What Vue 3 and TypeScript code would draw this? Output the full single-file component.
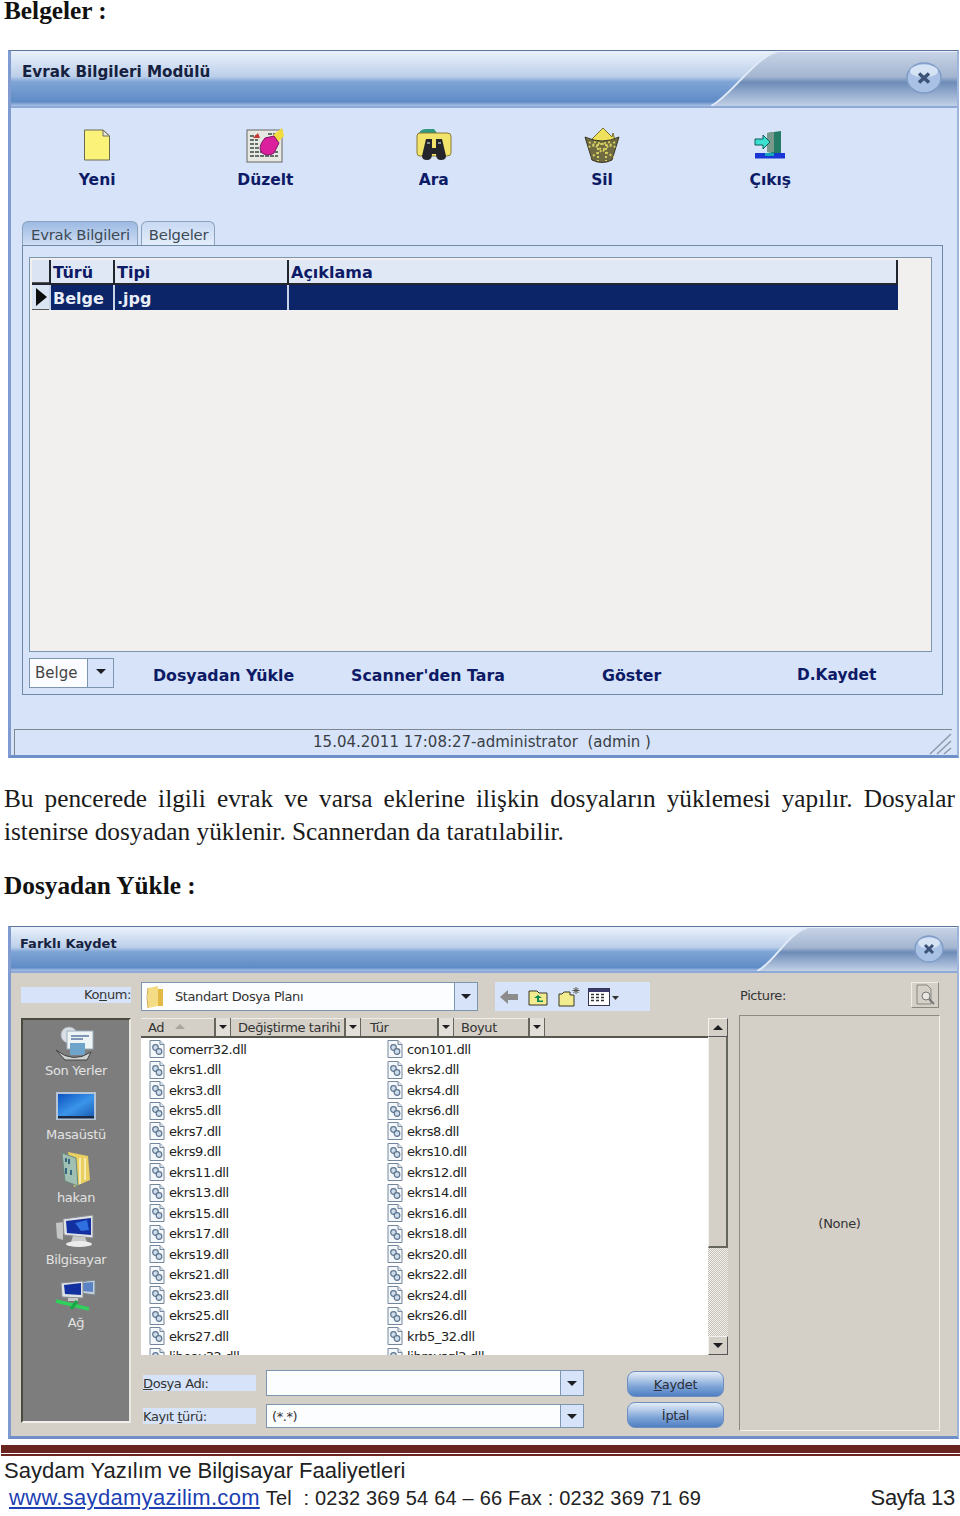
<script setup lang="ts">
// left and right columns of the file list, top to bottom
const leftFiles: string[] = ['comerr32.dll', 'ekrs1.dll', 'ekrs3.dll', 'ekrs5.dll', 'ekrs7.dll', 'ekrs9.dll', 'ekrs11.dll', 'ekrs13.dll', 'ekrs15.dll', 'ekrs17.dll', 'ekrs19.dll', 'ekrs21.dll', 'ekrs23.dll', 'ekrs25.dll', 'ekrs27.dll', 'libeay32.dll']
const rightFiles: string[] = ['con101.dll', 'ekrs2.dll', 'ekrs4.dll', 'ekrs6.dll', 'ekrs8.dll', 'ekrs10.dll', 'ekrs12.dll', 'ekrs14.dll', 'ekrs16.dll', 'ekrs18.dll', 'ekrs20.dll', 'ekrs22.dll', 'ekrs24.dll', 'ekrs26.dll', 'krb5_32.dll', 'libmysql2.dll']
const files = leftFiles.flatMap((name, i) => [name, rightFiles[i]])

const headers = [
  { label: 'Ad', width: 73, pad: 7, sort: true },
  { label: 'Değiştirme tarihi', width: 113, pad: 7, sort: false },
  { label: 'Tür', width: 76, pad: 9, sort: false },
  { label: 'Boyut', width: 74, pad: 7, sort: false },
]
</script>

<template>
  <div class="page">
    <h2 class="head first">Belgeler :</h2>

    <section class="win win-a">
      <header class="title title-a">
        <span>Evrak Bilgileri Modülü</span>
        <svg class="notch" width="246" height="56" viewBox="0 0 246 56">
          <defs>
            <linearGradient id="ng" x1="0" y1="0" x2="0" y2="1">
              <stop offset="0" stop-color="#c7d3e6" />
              <stop offset=".46" stop-color="#a3b5d0" />
              <stop offset=".56" stop-color="#6e8cb8" />
              <stop offset="1" stop-color="#c1d0e6" />
            </linearGradient>
          </defs>
          <path d="M0 55 C20 45 45 5 66 1 L246 1 L246 55Z" fill="url(#ng)" />
          <path d="M0 55 C20 45 45 5 66 1" fill="none" stroke="#dfe9f7" stroke-width="2" />
        </svg>
        <svg class="close close-a" width="36" height="32" viewBox="0 0 36 32">
          <ellipse cx="18" cy="16" rx="17" ry="15" fill="#a9c1e4" stroke="#7e9cc6" stroke-width="1.5" />
          <ellipse cx="18" cy="9" rx="14" ry="6.500" fill="#e4edf9" opacity=".75" />
          <path d="M13 11.500 L23 20.500 M23 11.500 L13 20.500" stroke="#3d5377" stroke-width="3.600" />
        </svg>
      </header>
      <div class="win-a-body">
        <div class="toolbar">
          <div class="tool">
            <svg width="30" height="34" viewBox="0 0 30 34">
              <path d="M2.500 2 H21 L27.500 8 V32 H2.500Z" fill="#fbf27a" stroke="#6a6a58" />
              <path d="M21 2 V8 H27.500Z" fill="#e8e8e0" stroke="#6a6a58" />
            </svg>
            <span>Yeni</span>
          </div>
          <div class="tool">
            <svg width="38" height="36" viewBox="0 0 38 36">
              <rect x="1" y="3" width="35" height="32" fill="#e8e8e2" stroke="#666" />
              <path d="M4 9h10M4 13h8M4 17h8M4 21h10M4 25h28M4 29h28M22 7h10" stroke="#66706a" stroke-width="2" stroke-dasharray="4 1" />
              <path d="M12 6 L7 11 L14 11Z" fill="#c53a30" />
              <path d="M27 8 L36 1 L38 9 L31 16Z" fill="#f3dc3d" />
              <path d="M19 11 L28 9 L33 16 L28 26 Q22 30 16 26 Q11 20 19 11Z" fill="#dc1f9c" stroke="#7b1866" />
            </svg>
            <span>Düzelt</span>
          </div>
          <div class="tool">
            <svg width="36" height="34" viewBox="0 0 36 34">
              <path d="M3 5 Q5 1 10 1 H18 L21 5Z" fill="#2f9a80" />
              <path d="M1 8 Q1 5 4 5 H31 Q35 5 35 8 V25 Q35 28 31 28 H4 Q1 28 1 25Z" fill="#f2e36a" stroke="#8a7a35" />
              <path d="M10 11 H16 V20 H20 V11 H26 L30 28 Q30 32 25 32 Q20 32 20 26 H16 Q16 32 11 32 Q6 32 6 28Z" fill="#23252b" />
              <path d="M11 15h3M22 15h3" stroke="#8b8f99" stroke-width="2" />
            </svg>
            <span>Ara</span>
          </div>
          <div class="tool">
            <svg width="36" height="36" viewBox="0 0 36 36">
              <path d="M8 12 L19 1 L28 10 L29 6 L31 14 L18 18Z" fill="#eee25d" stroke="#77702e" />
              <path d="M1 10 Q18 18 35 10 L28 33 Q18 38 8 33Z" fill="#6f6a42" stroke="#3c3924" />
              <path d="M5 15 L30 30 M10 15 L32 20 M31 15 L7 30 M26 15 L4 20 M14 17 L14 34 M22 17 L22 34" stroke="#d6cf5f" stroke-width="2" stroke-dasharray="2 2" />
            </svg>
            <span>Sil</span>
          </div>
          <div class="tool">
            <svg width="32" height="30" viewBox="0 0 32 30">
              <path d="M13 3 L27 1 V24 H24 L13 22Z" fill="#247c66" />
              <path d="M13 3 L20 2 V22 L13 22Z" fill="#79998c" />
              <rect x="1" y="23" width="30" height="5.500" fill="#1a35d6" />
              <path d="M11 23 H20 V26 H11Z" fill="#16a8b8" />
              <path d="M1 9 H9 V5 L16 12 L9 19 V15 H1Z" fill="#3ce0d0" stroke="#0c5d5a" />
            </svg>
            <span>Çıkış</span>
          </div>
        </div>

        <div class="tabs">
          <span class="tab active">Evrak Bilgileri</span>
          <span class="tab">Belgeler</span>
        </div>

        <div class="panel">
          <div class="grid">
            <div class="row row-head">
              <span class="ind"></span>
              <span class="cell c1">Türü</span>
              <span class="cell c2">Tipi</span>
              <span class="cell c3">Açıklama</span>
            </div>
            <div class="row row-sel">
              <span class="ind"><i class="tri"></i></span>
              <span class="cell c1">Belge</span>
              <span class="cell c2">.jpg</span>
              <span class="cell c3"></span>
            </div>
          </div>
          <div class="actions">
            <div class="mini-combo">
              <span class="mini-val">Belge</span>
              <span class="mini-arrow"><i class="down"></i></span>
            </div>
            <span class="act a1">Dosyadan Yükle</span>
            <span class="act a2">Scanner'den Tara</span>
            <span class="act a3">Göster</span>
            <span class="act a4">D.Kaydet</span>
          </div>
        </div>

        <div class="status">
          <span>15.04.2011 17:08:27-administrator&nbsp; (admin )</span>
          <svg class="grip" width="24" height="22" viewBox="0 0 24 22">
            <path d="M2 21 L23 1 M9 21 L23 8 M16 21 L23 15" stroke="#8d9aa8" stroke-width="1.500" />
          </svg>
        </div>
      </div>
    </section>

    <p class="para">Bu pencerede ilgili evrak ve varsa eklerine ilişkin dosyaların yüklemesi yapılır. Dosyalar istenirse dosyadan yüklenir. Scannerdan da taratılabilir.</p>

    <h2 class="head second">Dosyadan Yükle :</h2>

    <section class="win win-b">
      <header class="title title-b">
        <span>Farklı Kaydet</span>
        <svg class="notch" width="200" height="45" viewBox="0 0 200 45">
          <defs>
            <linearGradient id="ng2" x1="0" y1="0" x2="0" y2="1">
              <stop offset="0" stop-color="#c7d3e6" />
              <stop offset=".46" stop-color="#a3b5d0" />
              <stop offset=".56" stop-color="#6e8cb8" />
              <stop offset="1" stop-color="#c1d0e6" />
            </linearGradient>
          </defs>
          <path d="M0 44 C16 37 32 5 50 1 L200 1 L200 44Z" fill="url(#ng2)" />
          <path d="M0 44 C16 37 32 5 50 1" fill="none" stroke="#dfe9f7" stroke-width="2" />
        </svg>
        <svg class="close close-b" width="30" height="28" viewBox="0 0 30 28">
          <ellipse cx="15" cy="14" rx="14" ry="13" fill="#a9c1e4" stroke="#7e9cc6" stroke-width="1.500" />
          <ellipse cx="15" cy="8" rx="11" ry="5.500" fill="#e4edf9" opacity=".75" />
          <path d="M11 10 L19 18 M19 10 L11 18" stroke="#3d5377" stroke-width="3" />
        </svg>
      </header>

      <div class="dlg">
        <div class="dlg-left">
          <label class="konum">Ko<u>n</u>um:</label>
          <aside class="places">
            <div class="place p1">
              <svg width="46" height="36" viewBox="0 0 46 36">
                <circle cx="16" cy="9" r="8" fill="#d9dfe4" stroke="#aab2b9" />
                <rect x="14" y="5" width="26" height="18" fill="#eef3f6" stroke="#9fb0bd" />
                <path d="M18 10h18M18 13h12" stroke="#7e97b5" stroke-width="2" />
                <rect x="17" y="17" width="15" height="12" fill="#6ea4c9" />
                <path d="M3 24 Q20 38 38 26 L34 34 H12Z" fill="#cfd2d2" stroke="#444" />
              </svg>
              <span>Son Yerler</span>
            </div>
            <div class="place p2">
              <svg width="42" height="30" viewBox="0 0 42 30">
                <defs>
                  <linearGradient id="dk" x1="0" y1="0" x2="1" y2="1">
                    <stop offset="0" stop-color="#0c52c0" />
                    <stop offset=".55" stop-color="#3b95ea" />
                    <stop offset="1" stop-color="#1a5fb8" />
                  </linearGradient>
                </defs>
                <rect x="1" y="1" width="40" height="28" fill="#b5c5d6" />
                <rect x="3" y="3" width="36" height="22" fill="url(#dk)" />
                <rect x="3" y="25" width="36" height="2.500" fill="#1b2a44" />
              </svg>
              <span>Masaüstü</span>
            </div>
            <div class="place p3">
              <svg width="32" height="38" viewBox="0 0 32 38">
                <path d="M8 2 L28 6 L30 30 L14 37Z" fill="#e9cf62" />
                <path d="M2 3 L16 8 L18 36 L5 31Z" fill="#9fc0b2" stroke="#6c8a7b" />
                <path d="M6 8v4M9 9v5M6 18v6M11 20v5" stroke="#38687d" stroke-width="2" />
                <path d="M20 8v26M25 8v22" stroke="#f5ebb0" stroke-width="2" />
              </svg>
              <span>hakan</span>
            </div>
            <div class="place p4">
              <svg width="42" height="34" viewBox="0 0 42 34">
                <path d="M1 9 L8 8 V26 L2 24Z" fill="#c4c6c6" />
                <path d="M8 5 L38 1 V24 L9 21Z" fill="#dfe2e4" stroke="#8a8f92" />
                <path d="M11 7 L36 4 V21 L12 19Z" fill="#12309f" />
                <path d="M20 9 L32 6 L34 16 L26 17Z" fill="#2f6fe0" />
                <path d="M18 22 L30 23 L32 28 H16Z" fill="#c8caca" />
                <ellipse cx="24" cy="30" rx="13" ry="3" fill="#ececec" />
              </svg>
              <span>Bilgisayar</span>
            </div>
            <div class="place p5">
              <svg width="42" height="32" viewBox="0 0 42 32">
                <path d="M24 3 L40 1 V16 L25 14Z" fill="#c6cfd6" stroke="#7a8891" />
                <path d="M27 4 L38 3 V13 L27 12Z" fill="#5a83c5" />
                <path d="M6 4 L28 2 V19 L7 18Z" fill="#dfe2e4" stroke="#8a8f92" />
                <path d="M9 6 L26 4 V16 L10 15Z" fill="#12309f" />
                <path d="M13 19h10v3H13z" fill="#c8caca" />
                <path d="M1 22 L34 30" stroke="#2fd05c" stroke-width="3.500" />
                <path d="M22 22 L16 30" stroke="#18a844" stroke-width="3" />
              </svg>
              <span>Ağ</span>
            </div>
          </aside>
        </div>

        <div class="dlg-mid">
          <div class="top-row">
            <div class="combo combo-loc">
              <svg width="20" height="24" viewBox="0 0 20 24">
                <path d="M3 3 L13 1 V21 L3 23Z" fill="#f4dc85" />
                <path d="M13 4 H18 V21 L13 21Z" fill="#e4b844" />
                <path d="M3 3 Q1 12 3 23" fill="none" stroke="#d3ae50" />
              </svg>
              <span class="combo-text">Standart Dosya Planı</span>
              <span class="combo-arrow"><i class="down"></i></span>
            </div>
            <div class="nav-icons">
              <svg width="18" height="14" viewBox="0 0 18 14">
                <path d="M0 7 L8 0 V4 H18 V10 H8 V14Z" fill="#8c8c8c" />
              </svg>
              <svg class="ni-up" width="20" height="18" viewBox="0 0 20 18">
                <path d="M1 3 H9 L11 5 H19 V17 H1Z" fill="#f3ec8e" stroke="#37372a" />
                <path d="M10 7 L6 10 H9 V14 H15 V12.500 H11 V10 H14Z" fill="#0c8a52" />
              </svg>
              <svg class="ni-new" width="22" height="20" viewBox="0 0 22 20">
                <path d="M1 7 H4 L6 5 H12 V8 H16 V19 H1Z" fill="#f3ec8e" stroke="#37372a" />
                <path d="M18 0v7M14.500 3.500h7M15.500 1l5 5M20.500 1l-5 5" stroke="#54544a" />
              </svg>
              <svg class="ni-view" width="32" height="18" viewBox="0 0 32 18">
                <rect x="0.500" y="0.500" width="21" height="17" fill="#fff" stroke="#33334a" />
                <rect x="0.500" y="0.500" width="21" height="3.500" fill="#3a3a6a" />
                <path d="M3 6.500h3M8 6.500h3M13 6.500h3M3 9.500h3M8 9.500h3M13 9.500h3M3 12.500h3M8 12.500h3M13 12.500h3" stroke="#333" stroke-width="1.600" />
                <path d="M24 8h7L27.500 12Z" fill="#333" />
              </svg>
            </div>
          </div>

          <div class="browser">
            <div class="listing">
              <div class="list-head">
                <template v-for="h in headers" :key="h.label">
                  <span class="lh" :style="{ width: h.width + 'px', paddingLeft: h.pad + 'px' }">
                    {{ h.label }}
                    <i v-if="h.sort" class="up-sort"></i>
                  </span>
                  <span class="lh-drop"><i class="down small"></i></span>
                </template>
                <span class="lh-rest"></span>
              </div>
              <div class="list-body">
                <div v-for="f in files" :key="f" class="file">
                  <svg width="16" height="18" viewBox="0 0 16 18">
                    <path d="M1 .500 H11 L15 4.500 V17.500 H1Z" fill="#f5f8fb" stroke="#75879c" />
                    <path d="M11 .500 V4.500 H15" fill="#dfe6ee" stroke="#75879c" />
                    <circle cx="6.500" cy="7.500" r="2.800" fill="#cfdcea" stroke="#5d7590" stroke-width="1.200" />
                    <circle cx="10" cy="11.500" r="2.800" fill="#cfdcea" stroke="#5d7590" stroke-width="1.200" />
                  </svg>
                  <span>{{ f }}</span>
                </div>
              </div>
            </div>
            <div class="scroll">
              <span class="sb-btn"><i class="up"></i></span>
              <span class="sb-thumb"></span>
              <span class="sb-track"></span>
              <span class="sb-btn"><i class="down"></i></span>
            </div>
          </div>

          <div class="form">
            <div class="fields">
              <div class="field f-a">
                <label class="f-label"><u>D</u>osya Adı:</label>
                <div class="combo f-combo f-combo-a">
                  <span class="combo-text"></span>
                  <span class="combo-arrow"><i class="down"></i></span>
                </div>
              </div>
              <div class="field f-b">
                <label class="f-label">Kayıt <u>t</u>ürü:</label>
                <div class="combo f-combo f-combo-b">
                  <span class="combo-text">(*.*)</span>
                  <span class="combo-arrow"><i class="down"></i></span>
                </div>
              </div>
            </div>
            <div class="btns">
              <button class="btn"><u>K</u>aydet</button>
              <button class="btn">İptal</button>
            </div>
          </div>
        </div>

        <div class="dlg-right">
          <div class="pic-head">
            <span>Picture:</span>
            <span class="pic-btn">
              <svg width="22" height="22" viewBox="0 0 22 22">
                <path d="M3 1 H13 L17 5 V20 H3Z" fill="none" stroke="#85857c" />
                <circle cx="12" cy="12" r="4" fill="#e9e7e0" stroke="#777" />
                <path d="M15 15 L20 20" stroke="#777" stroke-width="2" />
              </svg>
            </span>
          </div>
          <div class="pic-box">(None)</div>
        </div>
      </div>
    </section>

    <footer class="foot">
      <div class="rule"></div>
      <div class="foot-a">Saydam Yazılım ve Bilgisayar Faaliyetleri</div>
      <div class="foot-b">
        <a class="link">www.saydamyazilim.com</a>
        <span class="tel">Tel&nbsp; : 0232 369 54 64 – 66 Fax : 0232 369 71 69</span>
        <span class="pageno">Sayfa 13</span>
      </div>
    </footer>
  </div>
</template>

<style scoped>
.page {
  width: 960px;
  height: 1516px;
  overflow: hidden;
  background: #fff;
  color: #111;
  font-family: "DejaVu Sans", sans-serif;
}
.head {
  margin: 0;
  padding-left: 4px;
  font: bold 25.300px/20px "Liberation Serif", serif;
}
.head.first { height: 22px; margin-bottom: 28px; }
.head.second { height: 28px; margin: 23px 0 27px; line-height: 28px; }
.para {
  margin: 24px 5px 0 4px;
  font: 25.300px/33px "Liberation Serif", serif;
  text-align: justify;
  color: #1a1a1a;
}

/* windows */
.win {
  margin-left: 8px;
  width: 951px;
  border: 1px solid #5d7397;
  border-left: 3px solid #7f9bd0;
  border-bottom: 3px solid #6f8fc8;
  border-right: 2px solid #9db5dc;
  box-sizing: border-box;
}
.win-a { height: 708px; background: #d6e3f8; }
.win-b { height: 513px; background: #d4d0c8; }
.title {
  position: relative;
  overflow: hidden;
  font-weight: bold;
  color: #16213f;
  border-bottom: 2px solid #8fa9d6;
  box-sizing: border-box;
  background: linear-gradient(#eaf2fc 0, #bccfe9 46%, #7fa5d6 56%, #5f8bc5 92%, #a9c0e6 100%);
}
.title-a { height: 57px; padding: 12px 0 0 11px; font-size: 15.200px; line-height: 18px; }
.title-b { height: 46px; padding: 9px 0 0 9px; font-size: 13px; line-height: 16px; }
.notch { position: absolute; right: 0; top: 0; }
.close { position: absolute; }
.close-a { right: 15px; top: 11px; }
.close-b { right: 13px; top: 8px; }

/* evrak window */
.win-a-body { display: flex; flex-direction: column; height: 648px; }
.toolbar { display: flex; height: 113px; padding: 18px 0 0 2px; box-sizing: border-box; }
.tool {
  width: 168.300px;
  display: flex;
  flex-direction: column;
  align-items: center;
  font-weight: bold;
  font-size: 15.500px;
  color: #0d1a66;
}
.tool svg { height: 38px; margin-bottom: 7px; }
.tabs { display: flex; gap: 3px; margin-left: 11px; height: 24px; }
.tab {
  padding: 0 6px 0 7px;
  font-size: 14.800px;
  line-height: 26px;
  color: #3c4a56;
  white-space: nowrap;
  border: 1px solid #8aa2bd;
  border-bottom: 0;
  border-radius: 6px 6px 0 0;
  background: linear-gradient(#c8d9f2, #e3edfb);
  letter-spacing: -.2px;
}
.tab.active { background: linear-gradient(#9dbae2, #cfdef4); padding: 0 7px 0 8px; }
.panel {
  margin-left: 11px;
  width: 921px;
  height: 450px;
  border: 1px solid #6e8aa5;
  box-sizing: border-box;
  padding: 11px 0 0 6px;
}
.grid {
  width: 903px;
  height: 395px;
  box-sizing: border-box;
  border: 1px solid #7d95ae;
  background: #f1f0ee;
  padding: 2px 0 0 2px;
}
.row { display: flex; width: 866px; font-weight: bold; font-size: 16px; }
.row-head { height: 25px; background: #e0e8f6; color: #0d1a66; border-bottom: 2px solid #23262e; box-sizing: border-box; }
.row-sel { height: 25px; color: #e8edf6; background: #0c2468; }
.ind {
  width: 17px;
  flex: none;
  background: #dbe4f3;
  display: flex;
  align-items: center;
  justify-content: center;
  border-bottom: 1px solid #555;
  box-sizing: border-box;
}
.tri { border-left: 11px solid #0d0d0d; border-top: 9px solid transparent; border-bottom: 9px solid transparent; margin-left: 2px; }
.cell { border-left: 2px solid #20242c; box-sizing: border-box; padding-left: 2px; line-height: 25px; white-space: nowrap; }
.row-sel .cell { border-left-color: #c9d3e6; padding-left: 2px; line-height: 27px; }
.c1 { width: 64px; }
.c2 { width: 174px; }
.c3 { flex: 1; border-right: 2px solid #20242c; }
.row-sel .c3 { border-right: 0; }
.actions { display: flex; align-items: center; height: 30px; margin-top: 6px; }
.mini-combo { display: flex; width: 85px; height: 30px; border: 1px solid #7d95ae; box-sizing: border-box; background: #fbfcff; font-size: 15px; color: #444; }
.mini-val { flex: 1; padding-left: 5px; line-height: 28px; }
.mini-arrow { width: 26px; background: #d6e3f8; border-left: 1px solid #7d95ae; display: flex; align-items: center; justify-content: center; padding-bottom: 4px; box-sizing: border-box; }
.down { display: block; border-top: 5px solid #1d1d22; border-left: 5px solid transparent; border-right: 5px solid transparent; }
.down.small { border-top-width: 4px; border-left-width: 4px; border-right-width: 4px; }
.up { display: block; border-bottom: 5px solid #1d1d22; border-left: 5px solid transparent; border-right: 5px solid transparent; }
.act { font-weight: bold; font-size: 15.800px; color: #0d1a66; white-space: nowrap; padding-top: 4px; }
.a1 { margin-left: 39px; width: 198px; }
.a2 { width: 251px; }
.a3 { width: 195px; }
.a4 { font-size: 15.400px; }
.status {
  position: relative;
  margin: 34px 0 0 3px;
  width: 938px;
  height: 26px;
  box-sizing: border-box;
  border-top: 1px solid #7e8790;
  border-left: 1px solid #7e8790;
  text-align: center;
  font-size: 15px;
  line-height: 25px;
  color: #3a3f45;
  padding-right: 3px;
}
.grip { position: absolute; right: 0; bottom: 0; }

/* save dialog */
.dlg { display: flex; padding-top: 9px; height: 454px; box-sizing: border-box; }
.dlg-left { width: 110px; margin-left: 10px; flex: none; }
.konum {
  display: block;
  margin-top: 5px;
  height: 16px;
  text-align: right;
  font-size: 13px;
  line-height: 16px;
  color: #333;
  background: #d6e3f8;
  letter-spacing: -.4px;
}
.places {
  margin-top: 15px;
  height: 405px;
  box-sizing: border-box;
  border: 2px solid #4a4a3f;
  border-right-color: #e8e6df;
  border-bottom-color: #f2f0ea;
  background: #7d7d7d;
  color: #e2e2e2;
  font-size: 13px;
  letter-spacing: -.3px;
  padding-top: 6px;
}
.place { display: flex; flex-direction: column; align-items: center; }
.place span { line-height: 16px; }
.p1 svg { margin-bottom: 1px; }
.p2 { margin-top: 12px; }
.p2 svg { margin-bottom: 6px; }
.p3 { margin-top: 7px; }
.p3 svg { margin-bottom: 2px; }
.p4 { margin-top: 8px; }
.p4 svg { margin-bottom: 4px; }
.p5 { margin-top: 11px; }
.p5 svg { margin-bottom: 4px; }

.dlg-mid { width: 587px; margin-left: 10px; flex: none; }
.top-row { display: flex; height: 29px; margin-bottom: 7px; }
.combo {
  display: flex;
  align-items: center;
  box-sizing: border-box;
  border: 1px solid #7d95ae;
  background: #fcfdff;
  font-size: 13px;
  color: #333;
}
.combo-loc { width: 337px; padding-left: 2px; }
.combo-loc svg { margin: 0 10px 0 1px; }
.combo-text { flex: 1; letter-spacing: -.4px; }
.combo-arrow {
  width: 22px;
  height: 100%;
  flex: none;
  background: #d6e3f8;
  border-left: 1px solid #7d95ae;
  display: flex;
  align-items: center;
  justify-content: center;
}
.nav-icons {
  margin-left: 17px;
  width: 155px;
  background: #d6e3f8;
  display: flex;
  align-items: center;
  padding-left: 5px;
  box-sizing: border-box;
}
.ni-up { margin-left: 10px; }
.ni-new { margin-left: 10px; }
.ni-view { margin-left: 8px; }

.browser { display: flex; height: 337px; }
.listing { width: 567px; flex: none; }
.list-head {
  display: flex;
  height: 20px;
  box-sizing: border-box;
  background: #d4d0c8;
  border-bottom: 2px solid #57574f;
  font-size: 13px;
  line-height: 18px;
  color: #333;
  letter-spacing: -.4px;
}
.lh { box-sizing: border-box; white-space: nowrap; border-top: 1px solid #efeee9; }
.up-sort {
  display: inline-block;
  margin-left: 7px;
  vertical-align: 3px;
  border-bottom: 5px solid #a9a69d;
  border-left: 5px solid transparent;
  border-right: 5px solid transparent;
}
.lh-drop {
  width: 17px;
  flex: none;
  border-left: 2px solid #66665e;
  border-right: 1px solid #66665e;
  box-sizing: border-box;
  display: flex;
  align-items: center;
  justify-content: center;
  background: #e2dfd8;
}
.lh-rest { flex: 1; }
.list-body {
  height: 317px;
  overflow: hidden;
  background: #fff;
  display: grid;
  grid-template-columns: 238px 1fr;
  grid-auto-rows: 20.500px;
  padding-top: 1px;
  box-sizing: border-box;
}
.file {
  display: flex;
  align-items: center;
  gap: 4px;
  padding-left: 8px;
  font-size: 13px;
  color: #222;
  letter-spacing: -.4px;
}
.scroll { width: 20px; display: flex; flex-direction: column; }
.sb-btn {
  height: 19px;
  flex: none;
  box-sizing: border-box;
  background: #d4d0c8;
  border: 1px solid #f3f2ee;
  border-right-color: #555;
  border-bottom-color: #555;
  display: flex;
  align-items: center;
  justify-content: center;
}
.sb-thumb {
  height: 211px;
  flex: none;
  box-sizing: border-box;
  background: #d4d0c8;
  border-right: 2px solid #66665e;
  border-bottom: 2px solid #66665e;
  border-left: 1px solid #f3f2ee;
}
.sb-track {
  flex: 1;
  background: repeating-conic-gradient(#c6c2ba 0 25%, #f1f0ec 0 50%) 0 0 / 2px 2px;
}

.form { display: flex; padding-top: 15px; }
.fields { width: 443px; flex: none; }
.field { display: flex; align-items: center; }
.f-a { height: 26px; }
.f-b { height: 24px; margin-top: 8px; }
.f-label {
  width: 113px;
  margin-left: 2px;
  height: 16px;
  flex: none;
  background: #d6e3f8;
  font-size: 13px;
  line-height: 18px;
  color: #333;
  letter-spacing: -.4px;
}
.f-combo { margin-left: 10px; width: 318px; height: 100%; padding-left: 5px; }
.btns { margin-left: 43px; display: flex; flex-direction: column; gap: 5px; padding-top: 1px; }
.btn {
  width: 97px;
  height: 26px;
  padding: 0;
  border: 1px solid #6f8fbe;
  border-radius: 8px;
  background: linear-gradient(#e3ecf8 0, #bcd0ea 25%, #7fa5d8 60%, #4f7fc2 100%);
  font: 13px "DejaVu Sans", sans-serif;
  color: #2a2f3a;
  letter-spacing: -.3px;
}

.dlg-right { width: 201px; margin-left: 11px; flex: none; }
.pic-head {
  display: flex;
  justify-content: space-between;
  align-items: center;
  height: 26px;
  padding-left: 1px;
  font-size: 13px;
  color: #333;
  letter-spacing: -.4px;
}
.pic-btn {
  width: 28px;
  height: 26px;
  margin-right: 1px;
  box-sizing: border-box;
  border: 1px solid #efede7;
  border-right-color: #8a887f;
  border-bottom-color: #8a887f;
  display: flex;
  align-items: center;
  justify-content: center;
}
.pic-box {
  margin-top: 7px;
  height: 416px;
  box-sizing: border-box;
  border: 1px solid #8d8a80;
  border-right-color: #f3f2ee;
  border-bottom-color: #f3f2ee;
  display: flex;
  align-items: center;
  justify-content: center;
  font-size: 13px;
  color: #333;
  letter-spacing: -.3px;
}

/* footer */
.foot { margin-top: 6px; font-family: "Liberation Sans", sans-serif; color: #222; }
.rule {
  height: 9px;
  background: #6b2520;
  border-bottom: 1px solid #fff;
  box-shadow: 0 2px 0 #6b2520;
  width: 959px;
  margin-left: 1px;
  box-sizing: border-box;
}
.foot-a { margin-top: 3px; padding-left: 4px; font-size: 22px; line-height: 28px; }
.foot-b { display: flex; align-items: baseline; padding-left: 9px; line-height: 26px; }
.link { color: #1c3fb4; text-decoration: underline; font-size: 22px; letter-spacing: .3px; }
.tel { margin-left: 6px; font-size: 20px; letter-spacing: .2px; }
.pageno { margin-left: auto; padding-right: 5px; font-size: 22px; letter-spacing: -.3px; }
</style>

<style>
html, body { margin: 0; background: #fff; }
</style>
